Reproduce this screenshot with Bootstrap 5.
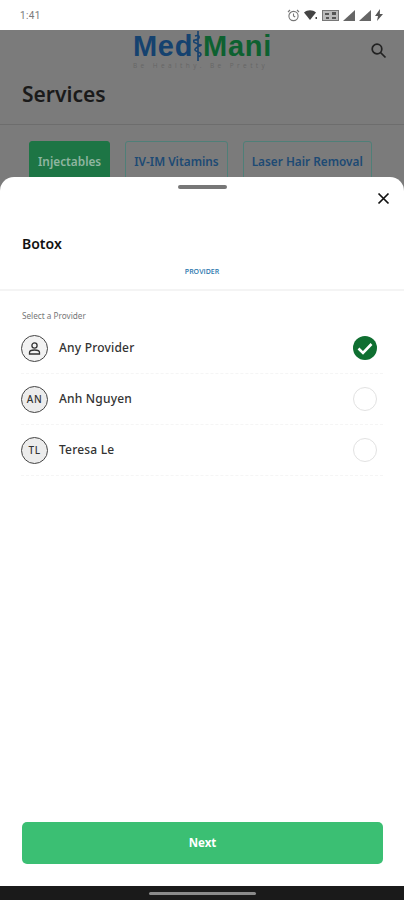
<!DOCTYPE html>
<html lang="en">

<head>
	<meta charset="UTF-8">
	<meta name="viewport" content="width=device-width, initial-scale=1.0">
	<title>Services</title>
	<link href="https://cdn.jsdelivr.net/npm/bootstrap@5.3.0/dist/css/bootstrap.min.css" rel="stylesheet">
	<style>
		html, body { height: 900px; overflow: hidden; }
		body { font-family: "Open Sans", "Noto Sans", sans-serif; color: #1c1c1c; }
		.phone { width: 404px; height: 900px; background: #7b7b7b; }

		.status-row { height: 30px; padding: 0 21px 0 20px; color: #7a7a7a; font-size: 10px; font-family: Roboto, sans-serif; letter-spacing: .4px; }
		.status-row svg { display: block; }

		.dim-area { height: 147px; overflow: hidden; }
		.top-row { height: 44px; position: relative; }
		.logo-wrap { width: 140px; margin-left: 133px; }
		.logo-text { font-family: "Liberation Sans", sans-serif; font-size: 29px; font-weight: 700; line-height: 30px; letter-spacing: .7px; }
		.logo-blue { color: #15426f; }
		.logo-green { color: #0d6130; }
		.logo-tag { font-size: 6.5px; line-height: 7px; letter-spacing: 3.4px; color: #666; white-space: nowrap; }
		.search-btn { position: absolute; right: 16px; top: 12px; }
		.page-title { font-size: 21px; font-weight: 600; line-height: 30px; color: #1a1a1a; padding: 5px 0 0 22px; height: 51px; border-bottom: 1px solid #6d6d6d; font-family: "Noto Sans", sans-serif; }
		.chip-row { padding: 16px 0 0 29px; gap: 15px; }
		.chip-item { height: 44px; padding: 8px 8px 0; border: 1px solid #4f7f78; border-radius: 3px; color: #1d4a74; font-size: 11.8px; font-weight: 600; white-space: nowrap; font-family: "Noto Sans", sans-serif; line-height: 22px; text-align: center; }
		.chip-on { background: #1d7545; border-color: #1d7545; color: #8fb5a0; }

		.sheet { height: 709px; background: #fff; border-radius: 14px 14px 0 0; position: relative; }
		.grab { width: 49px; height: 3.5px; background: #777; border-radius: 2px; position: absolute; left: 178px; top: 8px; }
		.close-x { position: absolute; right: 14px; top: 15px; }
		.sheet-name { padding: 57px 0 0 22px; font-size: 14px; font-weight: 600; line-height: 20px; color: #111; font-family: "Noto Sans", sans-serif; }
		.step-label { margin-top: 11px; height: 26px; border-bottom: 2px solid #f4f4f4; text-align: center; color: #2d78ae; font-size: 7px; font-weight: 600; line-height: 14px; }
		.pick-title { padding: 19px 0 0 22px; font-size: 8.2px; line-height: 11px; color: #777; font-family: "Noto Sans", sans-serif; }
		.pick-list { padding-top: 2px; }
		.pick-row { height: 51px; margin: 0 21px; border-bottom: 1px dashed #f5f5f5; font-size: 12px; font-weight: 500; color: #333; font-family: "Noto Sans", sans-serif; letter-spacing: .2px; }
		.avatar-ring { width: 27px; height: 27px; border-radius: 50%; border: 1.5px solid #444; background: #ececec; font-size: 10px; font-weight: 500; color: #333; margin-right: 11px; letter-spacing: .5px; }
		.avatar-plain { background: #f2f2f2; }
		.tick-off { width: 24px; height: 24px; border-radius: 50%; border: 1.5px solid #e2e2e2; margin-right: 6px; }
		.tick-on { margin-right: 6px; display: block; }

		.next-btn { position: absolute; left: 22px; top: 645px; width: 361px; height: 42px; background: #3bbf73; border: 0; border-radius: 5px; color: #fff; font-size: 11.500px; font-weight: 700; font-family: "Noto Sans", sans-serif; padding: 0; }
		.next-btn:hover { background: #3bbf73; color: #fff; }

		.nav-strip { height: 14px; background: #1a1a1a; position: relative; }
		.nav-pill { width: 107px; height: 3px; background: #8a8a8a; border-radius: 2px; position: absolute; left: 149px; top: 6px; }
	</style>
</head>

<body>
	<div class="phone">
		<!-- barra de status -->
		<div class="status-row bg-white d-flex align-items-center justify-content-between">
			<span>1:41</span>
			<div class="d-flex align-items-center gap-1">
				<svg width="13" height="13" viewBox="0 0 13 13" fill="none" stroke="#777" stroke-width="1.1"><circle cx="6.5" cy="7" r="4.6"/><path d="M6.5 4.5V7l1.7 1M1 3l2-2M12 3l-2-2"/></svg>
				<svg width="14" height="11" viewBox="0 0 14 11" fill="#444"><path d="M0 2.5C3.5-.6 8.5-.6 12 2.500L6 10z"/><rect x="11.500" y="7" width="1.500" height="2"/></svg>
				<svg width="17" height="11" viewBox="0 0 17 11"><rect x=".5" y=".5" width="16" height="10" fill="#bbb" stroke="#777"/><path d="M3 3h4v2H3zM10 2h4v3h-4zM4 7h3v2H4zM10 7h4v2h-4z" fill="#555"/></svg>
				<svg width="12" height="11" viewBox="0 0 12 11" fill="#666"><path d="M0 11L12 0v11z"/></svg>
				<svg width="12" height="11" viewBox="0 0 12 11" fill="#666"><path d="M0 11L12 0v11z"/></svg>
				<svg width="8" height="12" viewBox="0 0 8 12" fill="#555"><path d="M5 0L0 7h3l-1 5 6-7H4.800z"/></svg>
			</div>
		</div>

		<!-- conteudo escurecido atras do painel -->
		<div class="dim-area">
			<div class="top-row">
				<div class="logo-wrap">
					<div class="logo-text d-flex align-items-center">
						<span class="logo-blue">Med</span>
						<svg width="10" height="32" viewBox="0 0 9 32" fill="none" stroke="#15426f" stroke-width="1.6"><path d="M4.500 1v30M1.500 6c5-2 6 3 0 4s5 5 6 5-7 3-6 5 6 2 6 4-3 3-3 3"/></svg>
						<span class="logo-green">Mani</span>
					</div>
					<div class="logo-tag">Be Healthy. Be Pretty</div>
				</div>
				<svg class="search-btn" width="18" height="18" viewBox="0 0 18 18" fill="none" stroke="#222" stroke-width="1.700"><circle cx="7" cy="7" r="4.800"/><path d="M10.500 10.500L15.500 15.500"/></svg>
			</div>
			<div class="page-title">Services</div>
			<div class="chip-row d-flex">
				<div class="chip-item chip-on">Injectables</div>
				<div class="chip-item">IV-IM Vitamins</div>
				<div class="chip-item">Laser Hair Removal</div>
			</div>
		</div>

		<!-- painel inferior -->
		<div class="sheet">
			<div class="grab"></div>
			<svg class="close-x" width="13" height="13" viewBox="0 0 13 13" stroke="#111" stroke-width="1.700"><path d="M1.500 1.500l10 10M11.500 1.500l-10 10"/></svg>
			<div class="sheet-name">Botox</div>
			<div class="step-label">PROVIDER</div>
			<div class="pick-title">Select a Provider</div>
			<div class="pick-list">
				<div class="pick-row d-flex align-items-center">
					<div class="avatar-ring avatar-plain d-flex align-items-center justify-content-center">
						<svg width="15" height="15" viewBox="0 0 15 15" fill="none" stroke="#333" stroke-width="1.300"><circle cx="7.500" cy="4.500" r="2.600"/><path d="M2.500 13v-1.500c0-1.500 2-2.500 5-2.500s5 1 5 2.500V13z"/></svg>
					</div>
					<span class="flex-grow-1">Any Provider</span>
					<svg class="tick-on" width="24" height="24" viewBox="0 0 24 24"><circle cx="12" cy="12" r="12" fill="#0f6f31"/><path d="M5.500 12.500l4.500 4.500 8.500-9" fill="none" stroke="#fff" stroke-width="2.600"/></svg>
				</div>
				<div class="pick-row d-flex align-items-center">
					<div class="avatar-ring d-flex align-items-center justify-content-center">AN</div>
					<span class="flex-grow-1">Anh Nguyen</span>
					<div class="tick-off"></div>
				</div>
				<div class="pick-row d-flex align-items-center">
					<div class="avatar-ring d-flex align-items-center justify-content-center">TL</div>
					<span class="flex-grow-1">Teresa Le</span>
					<div class="tick-off"></div>
				</div>
			</div>
			<button type="button" class="btn next-btn">Next</button>
		</div>

		<div class="nav-strip">
			<div class="nav-pill"></div>
		</div>
	</div>

	<script src="https://cdn.jsdelivr.net/npm/bootstrap@5.3.0/dist/js/bootstrap.bundle.min.js"></script>
</body>

</html>
